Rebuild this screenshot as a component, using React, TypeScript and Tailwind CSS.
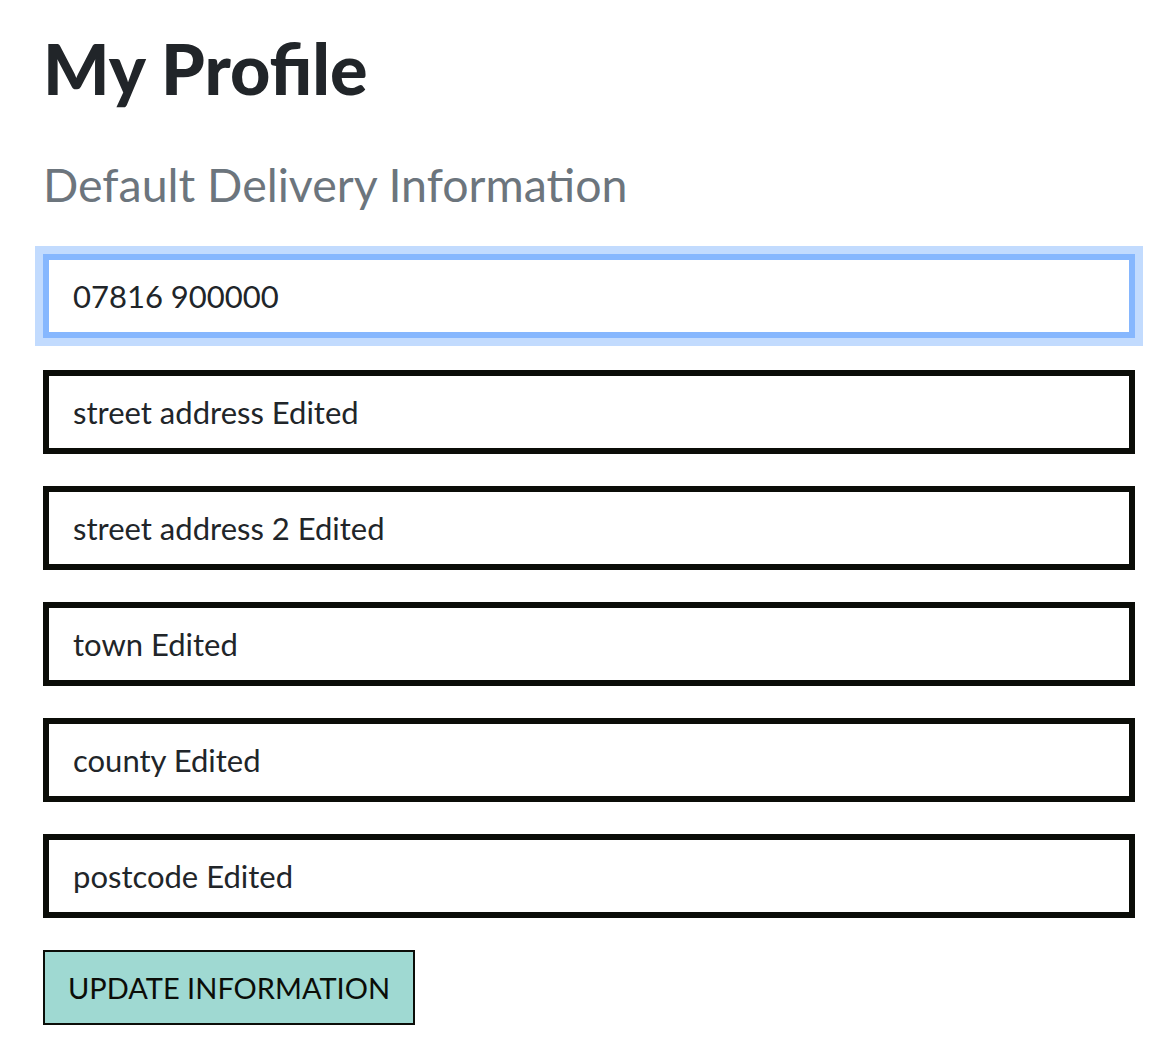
const fields = [
  "street address Edited",
  "street address 2 Edited",
  "town Edited",
  "county Edited",
  "postcode Edited",
];

export default function App() {
  return (
    <div className="min-h-screen bg-white px-[43px] pt-[26px] font-['Lato','Noto_Sans',sans-serif] text-[#212529]">
      <h1 className="font-['Lato',sans-serif] text-[70px] font-black leading-[84px]">
        My Profile
      </h1>
      <h4 className="mt-[46px] text-[46.5px] leading-[56px] text-[#6c757d]">
        Default Delivery Information
      </h4>
      <form className="mt-[42px] flex w-[1092px] flex-col gap-[32px]">
        <input
          defaultValue="07816 900000"
          className="h-[84px] w-full border-[6px] border-[#86b7fe] bg-white px-[24px] text-[31px] outline-none ring-[8px] ring-[#c2dbfe]"
        />
        {fields.map((f) => (
          <input
            key={f}
            defaultValue={f}
            className="h-[84px] w-full border-[6px] border-[#0b0d08] bg-white px-[24px] text-[31px] outline-none"
          />
        ))}
        <div>
          <button
            type="button"
            className="h-[75px] border-[2.5px] border-[#0b0d08] bg-[#9fd9d2] px-[23px] text-[29px] text-[#0b0d08]"
          >
            UPDATE INFORMATION
          </button>
        </div>
      </form>
    </div>
  );
}
